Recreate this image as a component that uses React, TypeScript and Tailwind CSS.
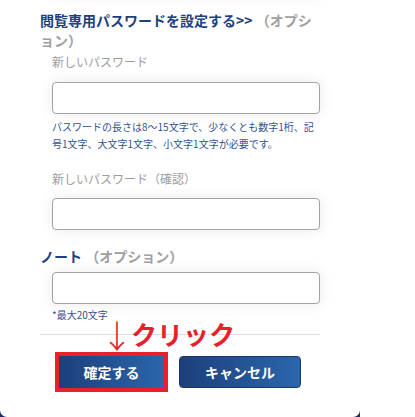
import React from "react";

const jp = { fontFamily: '"Noto Sans CJK JP", "Noto Sans", sans-serif' };

function Field({ className = "" }: { className?: string }) {
  return (
    <div
      className={`ml-[12px] h-[32px] w-[268px] rounded-[4px] border border-[#a3a3a3] bg-white shadow-[0_0_14px_rgba(0,0,0,0.09)] ${className}`}
    />
  );
}

export default function App() {
  return (
    <div className="relative h-[417px] w-[415px] overflow-hidden bg-white" style={jp}>
      <div className="h-[417px] w-[360px] bg-[#1c2a6b]">
        <div className="relative h-full overflow-hidden rounded-b-[7px] bg-white px-[40px]">
          {/* previous input (scrolled off) */}
          <div className="-mt-[36px] ml-[12px] h-[32px] w-[268px] rounded-[4px] bg-white shadow-[0_0_14px_rgba(0,0,0,0.09)]" />

          <h2 className="mt-[14px] w-[282px] text-[14px] font-bold leading-[20px] text-[#1d4080]">
            閲覧専用パスワードを設定する&gt;&gt;
            <span className="text-[#a0a0a0]"> （オプション）</span>
          </h2>

          <div className="ml-[12px] mt-[4px] text-[12px] leading-[16px] text-[#9d9d9d]">新しいパスワード</div>
          <Field className="mt-[12px]" />
          <p className="ml-[12px] mt-[4px] w-[270px] text-[10px] leading-[17px] text-[#2f5392]">
            パスワードの長さは8～15文字で、少なくとも数字1桁、記号1文字、大文字1文字、小文字1文字が必要です。
          </p>

          <div className="ml-[12px] mt-[19px] text-[12px] leading-[16px] text-[#9d9d9d]">新しいパスワード（確認）</div>
          <Field className="mt-[11px]" />

          <h2 className="mt-[16px] text-[14px] font-bold leading-[20px] text-[#1d4080]">
            ノート
            <span className="text-[#a0a0a0]"> （オプション）</span>
          </h2>
          <Field className="mt-[6px]" />
          <div className="ml-[12px] mt-[2px] text-[10px] leading-[17px] text-[#2f5392]">*最大20文字</div>

          <div className="mt-[11px] h-px w-[280px] bg-[#dedede]" />

          <div className="ml-[15px] mt-[17px] flex items-center gap-[11px]">
            <div className="border-[4px] border-[#e8202a]">
              <button className="flex h-[32px] w-[105px] items-center justify-center bg-gradient-to-r from-[#1d3f7c] to-[#2b66ab] text-[14px] font-bold text-white">
                確定する
              </button>
            </div>
            <button className="flex h-[32px] w-[122px] items-center justify-center rounded-[4px] border border-[#1a3670] bg-gradient-to-r from-[#1d3f7c] to-[#2b66ab] text-[14px] font-bold text-white">
              キャンセル
            </button>
          </div>

          {/* annotation */}
          <div className="absolute left-[101px] top-[314px] flex items-center text-[#e8202a]">
            <span className="text-[32px] font-light leading-[40px]">↓</span>
            <span className="-ml-[2px] text-[26px] font-bold leading-[40px]">クリック</span>
          </div>
        </div>
      </div>
    </div>
  );
}
